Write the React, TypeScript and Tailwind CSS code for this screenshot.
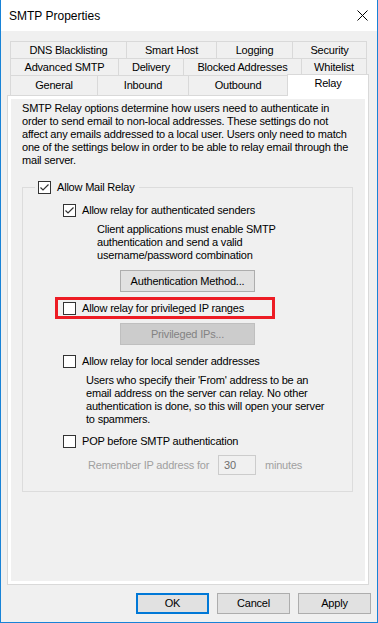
import React from 'react';

const FONT = "font-['Liberation_Sans',Arial,sans-serif]";

const CheckBox = ({ checked = false }: { checked?: boolean }) => (
  <div className="w-[13px] h-[13px] shrink-0 border border-[#333333] bg-white">
    {checked && (
      <svg width="11" height="11" viewBox="0 0 11 11">
        <path d="M1.5 5.5 L4 8 L9.5 2.5" fill="none" stroke="#333333" strokeWidth="1.2" />
      </svg>
    )}
  </div>
);

const CheckRow = ({ checked, label }: { checked?: boolean; label: string }) => (
  <div className="flex items-center h-[13px]">
    <CheckBox checked={checked} />
    <span className="ml-[6px] whitespace-nowrap leading-[13px]">{label}</span>
  </div>
);

const Lines = ({ lines, className = '' }: { lines: string[]; className?: string }) => (
  <div className={className}>
    {lines.map((l) => (
      <div key={l} className="h-[13px] leading-[13px] whitespace-nowrap">{l}</div>
    ))}
  </div>
);

const Tab = ({ label, w, last = false }: { label: string; w: string; last?: boolean }) => (
  <div className={`${w} h-full flex items-center justify-center border-l border-t border-[#d9d9d9] ${last ? 'border-r' : ''}`}>
    {label}
  </div>
);

const DlgButton = ({ label, primary = false }: { label: string; primary?: boolean }) => (
  <button
    className={`w-[73px] h-[21px] flex items-center justify-center bg-[#e1e1e1] ${
      primary ? 'border-2 border-[#0078d7]' : 'border border-[#adadad]'
    }`}
  >
    {label}
  </button>
);

export default function App() {
  return (
    <div className={`w-[378px] h-[623px] bg-[#f0f0f0] border-x border-b border-[#1883d7] flex flex-col text-[11px] tracking-[-0.2px] text-black ${FONT}`}>
      {/* title bar */}
      <div className="h-[31px] bg-white flex items-center justify-between pl-[8px] pr-[9px] shrink-0">
        <span className="text-[12px] tracking-normal">SMTP Properties</span>
        <svg width="11" height="11" viewBox="0 0 11 11">
          <path d="M0.5 0.5 L10.5 10.5 M10.5 0.5 L0.5 10.5" stroke="#000" strokeWidth="1" />
        </svg>
      </div>

      {/* tabs */}
      <div className="mt-[10px] ml-[9px] flex flex-col">
        <div className="flex h-[17px]">
          <Tab label="DNS Blacklisting" w="w-[116px]" />
          <Tab label="Smart Host" w="w-[90px]" />
          <Tab label="Logging" w="w-[76px]" />
          <Tab label="Security" w="w-[75px]" last />
        </div>
        <div className="flex h-[17px]">
          <Tab label="Advanced SMTP" w="w-[108px]" />
          <Tab label="Delivery" w="w-[65px]" />
          <Tab label="Blocked Addresses" w="w-[118px]" />
          <Tab label="Whitelist" w="w-[66px]" last />
        </div>
        <div className="flex h-[20px] items-end">
          <div className="w-[87px] h-[20px] flex items-center justify-center border-l border-t border-[#d9d9d9]">General</div>
          <div className="w-[91px] h-[20px] flex items-center justify-center border-l border-t border-[#d9d9d9]">Inbound</div>
          <div className="w-[99px] h-[20px] flex items-center justify-center border-l border-t border-[#d9d9d9]">Outbound</div>
          <div className="relative z-10 w-[82px] h-[22px] -mb-[1px] pb-[4px] flex items-center justify-center bg-white border-l border-t border-r border-[#d9d9d9]">
            Relay
          </div>
        </div>
      </div>

      {/* tab page */}
      <div className="ml-[6px] w-[362px] h-[490px] border border-[#d9d9d9] bg-white p-[3px] shrink-0">
        <div className="w-full h-full bg-[#f0f0f0] pt-[3px] pl-[11px]">
          <Lines
            lines={[
              'SMTP Relay options determine how users need to authenticate in',
              'order to send email to non-local addresses. These settings do not',
              'affect any emails addressed to a local user. Users only need to match',
              'one of the settings below in order to be able to relay email through the',
              'mail server.',
            ]}
          />

          {/* group box */}
          <div className="relative mt-[20px] w-[331px] h-[305px] border border-[#dcdcdc]">
            <div className="absolute -top-[7px] left-[12px] pl-[3px] pr-[4px] bg-[#f0f0f0]">
              <CheckRow checked label="Allow Mail Relay" />
            </div>

            <div className="pt-[16px] pl-[40px]">
              <CheckRow checked label="Allow relay for authenticated senders" />
            </div>
            <Lines
              className="mt-[6px] pl-[74px]"
              lines={[
                'Client applications must enable SMTP',
                'authentication and send a valid',
                'username/password combination',
              ]}
            />
            <div className="mt-[8px] ml-[97px] w-[135px] h-[22px] flex items-center justify-center bg-[#e1e1e1] border border-[#adadad]">
              Authentication Method...
            </div>

            <div className="mt-[5px] ml-[32px] w-[220px] h-[22px] border-[3px] border-[#ed1c24] flex items-center pl-[5px]">
              <CheckRow label="Allow relay for privileged IP ranges" />
            </div>

            <div className="mt-[4px] ml-[97px] w-[135px] h-[22px] flex items-center justify-center bg-[#cccccc] border border-[#bfbfbf] text-[#838383]">
              Privileged IPs...
            </div>

            <div className="mt-[10px] pl-[40px]">
              <CheckRow label="Allow relay for local sender addresses" />
            </div>
            <Lines
              className="mt-[6px] pl-[63px]"
              lines={[
                'Users who specify their \'From\' address to be an',
                'email address on the server can relay. No other',
                'authentication is done, so this will open your server',
                'to spammers.',
              ]}
            />

            <div className="mt-[9px] pl-[40px]">
              <CheckRow label="POP before SMTP authentication" />
            </div>

            <div className="mt-[7px] pl-[65px] flex items-center h-[20px] text-[#a0a0a0]">
              <span className="w-[130px] whitespace-nowrap">Remember IP address for</span>
              <div className="w-[38px] h-[20px] border border-[#cccccc] bg-[#f0f0f0] flex items-center pl-[5px] text-[#6d6d6d]">30</div>
              <span className="ml-[9px]">minutes</span>
            </div>
          </div>
        </div>
      </div>

      {/* dialog buttons */}
      <div className="mt-[8px] flex justify-end gap-[8px] pr-[6px]">
        <DlgButton label="OK" primary />
        <DlgButton label="Cancel" />
        <DlgButton label="Apply" />
      </div>
    </div>
  );
}
